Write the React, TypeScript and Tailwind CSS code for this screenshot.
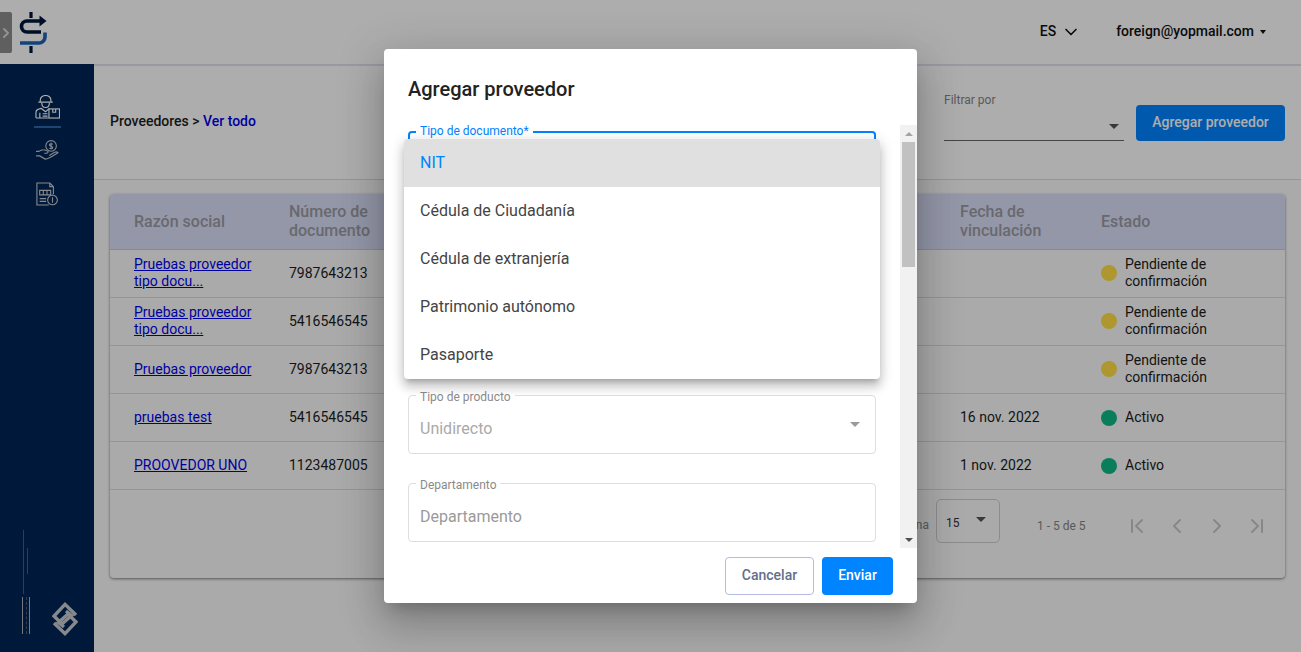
import { ChevronDown, ChevronFirst, ChevronLast, ChevronLeft, ChevronRight } from "lucide-react";

type Row = { name: string[]; doc: string; date: string; status: "pending" | "active" };

const ROWS: Row[] = [
  { name: ["Pruebas proveedor", "tipo docu..."], doc: "7987643213", date: "", status: "pending" },
  { name: ["Pruebas proveedor", "tipo docu..."], doc: "5416546545", date: "", status: "pending" },
  { name: ["Pruebas proveedor"], doc: "7987643213", date: "", status: "pending" },
  { name: ["pruebas test"], doc: "5416546545", date: "16 nov. 2022", status: "active" },
  { name: ["PROOVEDOR UNO"], doc: "1123487005", date: "1 nov. 2022", status: "active" },
];

const OPTIONS = ["NIT", "Cédula de Ciudadanía", "Cédula de extranjería", "Patrimonio autónomo", "Pasaporte"];

function Logo() {
  return (
    <svg width="30" height="42" viewBox="0 0 30 42" fill="none">
      <path d="M13 0v6M13 34v7" stroke="#00163a" strokeWidth="3.2" />
      <path d="M24 9H9a5.500 5.500 0 0 0 0 11h14" stroke="#00163a" strokeWidth="3.600" />
      <path d="M21.500 3.500l7 5.500-7 5.500z" fill="#00163a" />
      <path d="M27 20.500V25a6 6 0 0 1-6 6H2" stroke="#1d62b8" strokeWidth="3.600" />
    </svg>
  );
}

function SupplierIcon() {
  return (
    <svg width="25" height="24" viewBox="0 0 26 25" fill="none" stroke="#ffffff" strokeWidth="1.2">
      <path d="M5.500 7.500V5a5.500 4.500 0 0 1 11 0v2.500M3.500 7.500h15" />
      <path d="M7 8c0 3 1.600 5 4 5s4-2 4-5" />
      <path d="M1 24v-6c0-2 2.500-3.500 5.500-4l4.500 3.500 4-3.500" />
      <path d="M5 24v-5.500M8 19.500h5M8 22h5M1 24h13" />
      <rect x="14.500" y="14.500" width="11" height="9.500" />
      <path d="M18.500 14.500v3.500h3v-3.500" />
    </svg>
  );
}

function HandCoinIcon() {
  return (
    <svg width="24" height="20" viewBox="0 0 26 22" fill="none" stroke="#c8cad0" strokeWidth="1.2">
      <circle cx="17.500" cy="6.500" r="5.800" />
      <path d="M17.500 3v7M19.300 4.800c-.8-1-3.600-1-3.600.7s3.600 1 3.600 2.700-2.800 1.700-3.600.7" />
      <path d="M1 12.500h3l3-1.500h4l3 1.500c.8 1-.5 2-1.500 2H10" />
      <path d="M1 17.500h4l6 3.500c3 0 8-3 14-7-1-1-2.500-1-3.500-.5l-6 3.500" />
    </svg>
  );
}

function InvoiceIcon() {
  return (
    <svg width="22" height="24" viewBox="0 0 24 26" fill="none" stroke="#c8cad0" strokeWidth="1.2">
      <path d="M15 1H1v24h13M15 1l4 4v8M15 1v4h4" />
      <path d="M4 9h12v5H4zM8 9v5M12 9v5M4 18h7M4 21h7" />
      <circle cx="18" cy="19.500" r="5.300" />
      <path d="M18 16.500v6" />
    </svg>
  );
}

function BrandMark() {
  return (
    <svg width="26" height="34" viewBox="0 0 26 34" fill="none" stroke="#c8cad0" strokeWidth="3.4">
      <path d="M24 13L13 2.400 2 14l8 8 9.500-8.500L14 9" />
      <path d="M2 21l11 10.600L24 20l-8-8-9.500 8.500L12 25" />
    </svg>
  );
}

function Sidebar() {
  return (
    <aside className="w-[94px] shrink-0 bg-[#002657] flex flex-col items-center pt-[31px]">
      <div className="w-[27px] flex flex-col items-center border-b-2 border-[#2f66ad] pb-[7px]">
        <SupplierIcon />
      </div>
      <div className="mt-[12px]"><HandCoinIcon /></div>
      <div className="mt-[22px]"><InvoiceIcon /></div>
      <div className="mt-auto w-full pb-[16px] pl-[22px] flex items-end gap-[22px]">
        <div className="w-[8px] mb-[2px] flex flex-col items-start gap-[3px]">
          <div className="h-[64px] flex gap-[3px] ml-px">
            <div className="w-px h-full bg-[#4c5a73]" />
            <div className="w-px h-[40%] mt-[18px] bg-[#4c5a73]" />
          </div>
          <div className="w-[8px] h-[37px] border-x border-[#aeb1b8] flex justify-center">
            <div className="w-px h-full border-l border-dashed border-[#4c5a73]" />
          </div>
        </div>
        <BrandMark />
      </div>
    </aside>
  );
}

function Header() {
  return (
    <header className="h-[64px] shrink-0 bg-white flex items-center relative">
      <div className="absolute left-0 top-[12px] w-[12px] h-[41px] bg-[#8c8c8c] rounded-r-[2px] flex items-center justify-center">
        <ChevronRight size={16} strokeWidth={3} className="shrink-0 text-[#d8d8d8]" />
      </div>
      <div className="ml-[18px] mt-[2px]"><Logo /></div>
      <div className="ml-auto flex items-center text-[14px] font-medium text-[#111] pr-[35px] mt-[-1px]">
        <span className="ml-px">ES</span>
        <ChevronDown size={20} strokeWidth={2} className="ml-[5px]" />
        <span className="ml-[35px]">foreign@yopmail.com</span>
        <span className="ml-[6px] w-0 h-0 border-x-[3px] border-x-transparent border-t-[4px] border-t-[#111]" />
      </div>
    </header>
  );
}

function StatusDot({ status }: { status: Row["status"] }) {
  return (
    <div className={`flex items-center gap-[8px] ${status === "pending" ? "mb-[2px]" : ""}`}>
      <span className={`w-[16px] h-[16px] rounded-full shrink-0 ${status === "pending" ? "bg-[#ffdf45]" : "bg-[#0fb885]"}`} />
      <span className="leading-[17px]">
        {status === "pending" ? <>Pendiente de<br />confirmación</> : "Activo"}
      </span>
    </div>
  );
}

function Table() {
  return (
    <div className="mx-[16px] mt-[14px] h-[384px] bg-[#fbfbfb] rounded-[4px] shadow-[0_1px_3px_rgba(0,0,0,0.5)] flex flex-col">
      <div className="h-[56px] shrink-0 bg-[#dadff8] rounded-t-[4px] border-b border-[#c6cbe0] pl-[24px] grid grid-cols-[155px_671px_141px_1fr] items-center text-[16px] leading-[19px] font-medium text-[#9a9ba3]">
        <div>Razón social</div>
        <div className="mb-[2px]">Número de<br />documento</div>
        <div className="mb-[2px]">Fecha de<br />vinculación</div>
        <div>Estado</div>
      </div>
      {ROWS.map((r, i) => (
        <div key={i} className="h-[48px] shrink-0 border-b border-[#dcdcdc] pl-[24px] grid grid-cols-[155px_671px_141px_1fr] items-center text-[14px] text-[#1c1c1c]">
          <a href="#" className={`underline text-[#0000ee] leading-[17px] ${r.name.length > 1 ? "mb-[2px]" : ""}`}>
            {r.name.map((n, j) => <div key={j}>{n}</div>)}
          </a>
          <div>{r.doc}</div>
          <div>{r.date}</div>
          <StatusDot status={r.status} />
        </div>
      ))}
      <div className="flex-1 flex items-start pt-[9px] text-[12px] text-[#858585]">
        <span className="ml-auto mt-[17px]">Filas por página</span>
        <div className="ml-[7px] w-[64px] h-[44px] border border-[#cfcfcf] rounded-[5px] pl-[9px] pt-[14px] flex text-[#333] relative">
          15
          <span className="absolute right-[13px] top-[17px] w-0 h-0 border-x-[5px] border-x-transparent border-t-[5px] border-t-[#555]" />
        </div>
        <span className="ml-[37px] w-[48px] mt-[18px] whitespace-nowrap">1 - 5 de 5</span>
        <div className="ml-[40px] mr-[16px] mt-[15px] flex gap-[16px] text-[#c8c8c8]">
          <ChevronFirst size={24} />
          <ChevronLeft size={24} />
          <ChevronRight size={24} />
          <ChevronLast size={24} />
        </div>
      </div>
    </div>
  );
}

function Field({ label, value, focused, disabled }: { label?: string; value?: string; focused?: boolean; disabled?: boolean }) {
  return (
    <div className={`relative h-[59px] shrink-0 rounded-[4px] flex items-center pl-[11px] text-[16px] ${focused ? "border-2 border-[#0084ff]" : "border border-[#dedede]"} ${disabled ? "text-[#a9a9a9]" : "text-[#9a9a9a]"}`}>
      {label && <span className={`absolute bg-white px-[4px] text-[12px] leading-[14px] ${focused ? "left-[6px] top-[-9px] text-[#0084ff]" : "left-[7px] top-[-6px] text-[#8a8a8a]"}`}>{label}</span>}
      {value && <span className="mt-[8px]">{value}</span>}
      {disabled && <span className="absolute right-[15px] top-[26px] w-0 h-0 border-x-[5px] border-x-transparent border-t-[5px] border-t-[#9a9a9a]" />}
    </div>
  );
}

function Dialog() {
  return (
    <div className="w-[533px] h-[554px] bg-white rounded-[4px] flex flex-col relative shadow-[0_11px_15px_-7px_rgba(0,0,0,0.2),0_24px_38px_3px_rgba(0,0,0,0.14),0_9px_46px_8px_rgba(0,0,0,0.12)]">
      <h2 className="h-[76px] shrink-0 pl-[24px] pt-[27px] text-[20px] leading-[26px] font-medium text-[#222]">Agregar proveedor</h2>
      <div className="h-[423px] shrink-0 flex">
        <div className="flex-1 overflow-hidden pl-[24px] pr-[24px] pt-[6px] flex flex-col gap-[29px]">
          <Field label="Tipo de documento*" focused />
          <Field />
          <Field />
          <Field label="Tipo de producto" value="Unidirecto" disabled />
          <Field label="Departamento" value="Departamento" />
        </div>
        <div className="w-[17px] shrink-0 bg-[#f1f1f1] flex flex-col items-center">
          <div className="h-[17px] flex items-center"><span className="w-0 h-0 border-x-[4px] border-x-transparent border-b-[4px] border-b-[#a3a3a3]" /></div>
          <div className="w-[13px] h-[125px] bg-[#c1c1c1]" />
          <div className="mt-auto h-[17px] flex items-center"><span className="w-0 h-0 border-x-[4px] border-x-transparent border-t-[4px] border-t-[#505050]" /></div>
        </div>
      </div>
      <div className="flex justify-end gap-[8px] pt-[9px] pr-[24px]">
        <button className="w-[89px] h-[38px] pb-[2px] rounded-[4px] border border-[#b4bce6] text-[14px] font-medium text-[#656d8c]">Cancelar</button>
        <button className="w-[71px] h-[38px] pb-[2px] rounded-[4px] bg-[#0084ff] text-[14px] font-medium text-white">Enviar</button>
      </div>
      {/* open select menu */}
      <ul className="absolute left-[20px] top-[90px] w-[476px] bg-white rounded-[4px] overflow-hidden shadow-[0_5px_5px_-3px_rgba(0,0,0,0.2),0_8px_10px_1px_rgba(0,0,0,0.14),0_3px_14px_2px_rgba(0,0,0,0.12)]">
        {OPTIONS.map((o, i) => (
          <li key={o} className={`h-[48px] pl-[16px] flex items-center text-[16px] ${i === 0 ? "bg-[#e0e0e0] text-[#0084ff]" : "text-[#444]"}`}>{o}</li>
        ))}
      </ul>
    </div>
  );
}

export default function App() {
  return (
    <div className="h-screen overflow-hidden flex flex-col bg-white relative font-[Roboto,sans-serif]">
      <Header />
      <div className="flex-1 flex min-h-0">
        <Sidebar />
        <main className="flex-1 min-w-0 bg-[#fbfbfb] border-t-2 border-[#dfe3f0]">
          <div className="h-[114px] bg-white border-b border-[#dcdcdc] pl-[16px] pr-[16px] flex items-center">
            <div className="text-[14px] font-medium text-[#1c1c1c] mt-[-2px]">Proveedores &gt; <span className="text-[#0000f0]">Ver todo</span></div>
            <div className="ml-auto flex items-start gap-[12px]">
              <div className="w-[180px] h-[48px] border-b border-[#666] relative text-[12px] text-[#858585] leading-[14px] mt-[-12px]">
                Filtrar por
                <span className="absolute right-[5px] top-[31px] w-0 h-0 border-x-[5px] border-x-transparent border-t-[5px] border-t-[#555]" />
              </div>
              <button className="w-[149px] h-[36px] rounded-[4px] bg-[#0084ff] text-[14px] font-medium text-white">Agregar proveedor</button>
            </div>
          </div>
          <Table />
        </main>
      </div>
      <div className="absolute inset-0 bg-black/32 flex items-center justify-center">
        <Dialog />
      </div>
    </div>
  );
}
